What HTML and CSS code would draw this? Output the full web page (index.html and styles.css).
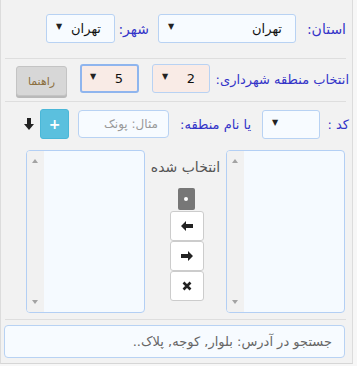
FILE: index.html
```html
<!DOCTYPE html>
<html lang="fa" dir="rtl">
<head>
    <meta charset="UTF-8">
    <meta name="viewport" content="width=device-width, initial-scale=1.0">
    <title>انتخاب منطقه</title>
    <link rel="stylesheet" href="styles.css">
</head>
<body>
    <div class="panel">
        <div class="row row-city">
            <span class="lbl lbl-province">استان:</span>
            <div class="sel sel-province"><span class="val">تهران</span><span class="caret">▼</span></div>
            <span class="lbl lbl-city">شهر:</span>
            <div class="sel sel-city"><span class="val">تهران</span><span class="caret">▼</span></div>
        </div>

        <div class="divider"></div>

        <div class="row row-district">
            <span class="lbl lbl-district">انتخاب منطقه شهرداری:</span>
            <div class="sel sel-pink sel-num"><span class="val">2</span><span class="caret">▼</span></div>
            <div class="sel sel-pink sel-num sel-focus"><span class="val">5</span><span class="caret">▼</span></div>
            <button class="btn btn-help">راهنما</button>
        </div>

        <div class="divider"></div>

        <div class="row row-code">
            <span class="lbl lbl-code">کد :</span>
            <div class="sel sel-num"><span class="val"></span><span class="caret">▼</span></div>
            <span class="lbl lbl-name">یا نام منطقه:</span>
            <div class="input input-name"><span class="placeholder">مثال: پونک</span></div>
            <button class="btn btn-add">+</button>
            <svg class="icon-down" width="10" height="12" viewBox="0 0 10 12">
                <path d="M3 0h4v6h3l-5 6-5-6h3z" fill="#222"/>
            </svg>
        </div>

        <div class="row row-lists">
            <div class="listbox">
                <div class="scrollbar"><span class="sb-up"></span><span class="sb-down"></span></div>
            </div>
            <div class="mover">
                <div class="mover-title">انتخاب شده</div>
                <div class="badge"><span class="dot"></span></div>
                <button class="btn btn-move">
                    <svg width="12" height="10" viewBox="0 0 12 10"><path d="M0 5l5-5v3h7v4h-7v3z" fill="#222"/></svg>
                </button>
                <button class="btn btn-move">
                    <svg width="12" height="10" viewBox="0 0 12 10"><path d="M12 5l-5-5v3h-7v4h7v3z" fill="#222"/></svg>
                </button>
                <button class="btn btn-move">
                    <svg width="10" height="10" viewBox="0 0 10 10"><path d="M1.5 1.5l7 7M8.5 1.5l-7 7" stroke="#222" stroke-width="2.6"/></svg>
                </button>
            </div>
            <div class="listbox">
                <div class="scrollbar"><span class="sb-up"></span><span class="sb-down"></span></div>
            </div>
        </div>

        <div class="divider divider-low"></div>

        <div class="input input-search"><span class="placeholder">جستجو در آدرس: بلوار, کوجه, پلاک..</span></div>
    </div>
</body>
</html>
```

FILE: styles.css
```css
body {
    margin: 0;
    padding: 0;
    background-color: #f7f7f7;
    font-family: "DejaVu Sans", "Noto Sans", sans-serif;
    direction: rtl;
}

.panel {
    width: 351px;
    height: 349px;
    margin-left: 0;
    margin-right: auto;
    padding-top: 14px;
    background-color: #f2f2f2;
    border-left: 1px solid #dcdcdc;
    border-right: 1px solid #dcdcdc;
    border-bottom: 1px solid #d6d6d6;
}

.row {
    display: flex;
    align-items: center;
}

.lbl {
    color: #3434c8;
    font-size: 13px;
    white-space: nowrap;
}

.divider {
    height: 1px;
    background-color: #dedede;
    margin: 15px 6px 5px 4px;
}

/* select look-alike */
.sel {
    position: relative;
    box-sizing: border-box;
    height: 29px;
    display: flex;
    align-items: center;
    background-color: #f7fbff;
    border: 1px solid #b8d2f3;
    border-radius: 3px;
    font-size: 13px;
    color: #111;
}

.sel .val {
    flex: 1;
    text-align: right;
}

.sel .caret {
    position: absolute;
    left: 9px;
    top: 7px;
    font-size: 8px;
    color: #222;
}

.sel-pink {
    background-color: #f9ebe6;
}

.sel-focus {
    border: 2px solid #8fb5ee;
}

.sel-focus .caret {
    left: 8px;
    top: 6px;
}

.row-city {
    padding-right: 6px;
    height: 29px;
}

.lbl-province {
    width: 50px;
    box-sizing: border-box;
    font-size: 14px;
}

.sel-province {
    width: 138px;
}

.sel-province .val,
.sel-city .val {
    padding-right: 13px;
}

.lbl-city {
    width: 43px;
    box-sizing: border-box;
    padding-right: 9px;
    font-size: 14px;
}

.sel-city {
    width: 69px;
}

.row-district {
    padding-right: 3px;
    height: 32px;
    align-items: flex-start;
}

.lbl-district {
    width: 139px;
    line-height: 32px;
}

.sel-num {
    width: 58px;
}

.sel-num .val {
    padding-right: 14px;
}

.sel-num.sel-focus {
    width: 59px;
    margin-right: 13px;
}

.btn {
    box-sizing: border-box;
    font-family: inherit;
    padding: 0;
    border-radius: 3px;
    cursor: pointer;
}

.btn-help {
    width: 51px;
    height: 30px;
    margin-top: 2px;
    margin-right: 13px;
    background-color: #d7d7d7;
    border: 1px solid #c4c4c4;
    box-shadow: 0 2px 0 #b9b9b9;
    color: #8b6f3e;
    font-size: 11px;
}

.divider + .row-code {
    margin-top: 7px;
}

.row-district + .divider {
    margin-top: 5px;
}

.row-code {
    padding-right: 3px;
    height: 30px;
}

.lbl-code {
    width: 29px;
}

.lbl-name {
    width: 93px;
    box-sizing: border-box;
    padding-right: 11px;
}

.input {
    box-sizing: border-box;
    display: flex;
    align-items: center;
    background-color: #f7fbff;
    border: 1px solid #b8d2f3;
    border-radius: 4px;
}

.placeholder {
    color: #999;
    font-size: 12px;
    white-space: nowrap;
}

.input-name {
    width: 91px;
    height: 28px;
    padding-right: 10px;
}

.btn-add {
    width: 29px;
    height: 30px;
    margin-right: 9px;
    background-color: #5bc0de;
    border: 1px solid #4ab7d8;
    color: #fff;
    font-size: 14px;
    font-weight: bold;
}

.icon-down {
    margin-right: 6px;
}

.row-lists {
    margin-top: 11px;
    padding-right: 7px;
    align-items: stretch;
    height: 163px;
}

.listbox {
    position: relative;
    box-sizing: border-box;
    width: 119px;
    background-color: #f5faff;
    border: 1px solid #b3cff4;
    border-radius: 4px;
    overflow: hidden;
}

.scrollbar {
    position: absolute;
    left: 0;
    top: 0;
    bottom: 0;
    width: 17px;
    background-color: #f1f1f1;
}

.sb-up,
.sb-down {
    position: absolute;
    left: 5px;
    width: 0;
    height: 0;
    border-left: 3.5px solid transparent;
    border-right: 3.5px solid transparent;
}

.sb-up {
    top: 8px;
    border-bottom: 4px solid #a3a3a3;
}

.sb-down {
    bottom: 8px;
    border-top: 4px solid #a3a3a3;
}

.mover {
    width: 81px;
    display: flex;
    flex-direction: column;
    align-items: center;
}

.mover-title {
    margin-top: 9px;
    color: #555;
    font-size: 14px;
    white-space: nowrap;
}

.badge {
    width: 17px;
    height: 22px;
    margin-top: 13px;
    margin-bottom: 1px;
    margin-left: 1px;
    background-color: #777;
    border-radius: 2px;
    display: flex;
    align-items: center;
    justify-content: center;
}

.dot {
    width: 4px;
    height: 4px;
    border-radius: 50%;
    background-color: #fff;
}

.btn-move {
    width: 34px;
    height: 30px;
    margin-left: 3px;
    background-color: #fff;
    border: 1px solid #ccc;
    display: flex;
    align-items: center;
    justify-content: center;
}

.divider-low {
    margin-top: 6px;
}

.input-search {
    width: 341px;
    height: 33px;
    margin-right: 7px;
    padding-right: 12px;
}

.input-search .placeholder {
    color: #666;
    font-size: 13px;
}
```
